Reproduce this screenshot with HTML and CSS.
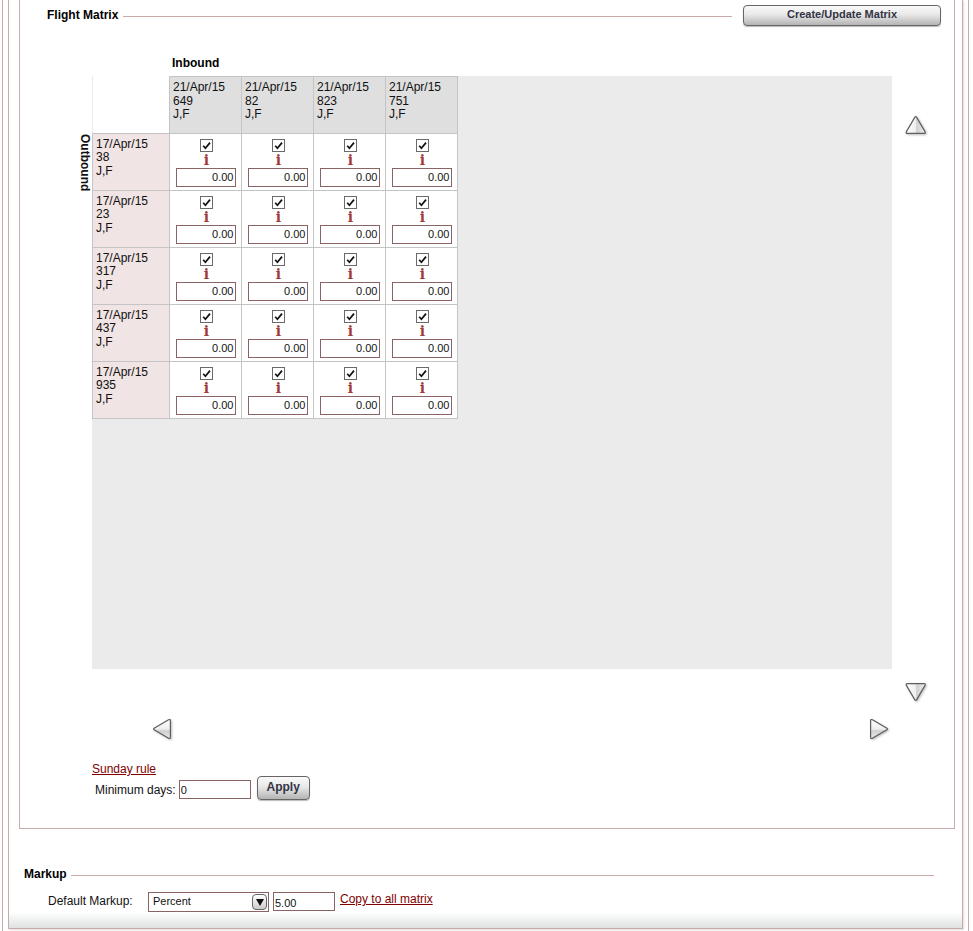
FILE: index.html
```html
<!DOCTYPE html>
<html lang="en">
<head>
<meta charset="utf-8">
<title>Flight Matrix</title>
<link rel="stylesheet" href="styles.css">
</head>
<body>
<svg class="defs" width="0" height="0" aria-hidden="true">
  <defs>
    <symbol id="tick" viewBox="0 0 13 13"><path d="M3.2 6.8 5.4 9.2 10 3.6" fill="none" stroke="#111" stroke-width="1.7"/></symbol>
    <linearGradient id="gh" x1="0" x2="1" y1="0" y2="0"><stop offset="0" stop-color="#fff"/><stop offset=".5" stop-color="#eee"/><stop offset=".55" stop-color="#d0d0d0"/><stop offset="1" stop-color="#f0f0f0"/></linearGradient>
    <linearGradient id="gv" x1="0" x2="0" y1="0" y2="1"><stop offset="0" stop-color="#fff"/><stop offset=".5" stop-color="#eee"/><stop offset=".6" stop-color="#d0d0d0"/><stop offset="1" stop-color="#e8e8e8"/></linearGradient>
  </defs>
</svg>
<div class="outer">
  <div class="panel">
    <section class="box">
      <div class="title-row">
        <h2 class="legend">Flight Matrix</h2>
        <span class="rule"></span>
        <button class="btn btn-wide" type="button">Create/Update Matrix</button>
      </div>

      <div class="matrix">
        <div class="inbound">Inbound</div>
        <div class="stage">
          <div class="scroller">
            <span class="outbound">Outbound</span>
            <table class="grid">
              <tr>
                <td class="corner"></td>
                <th>21/Apr/15<br>649<br>J,F</th>
                <th>21/Apr/15<br>82<br>J,F</th>
                <th>21/Apr/15<br>823<br>J,F</th>
                <th>21/Apr/15<br>751<br>J,F</th>
              </tr>
              <tr>
                <th class="side">17/Apr/15<br>38<br>J,F</th>
                <td><span class="chk"><svg width="13" height="13"><use href="#tick"/></svg></span><span class="info">i</span><input class="amt" value="0.00"></td>
                <td><span class="chk"><svg width="13" height="13"><use href="#tick"/></svg></span><span class="info">i</span><input class="amt" value="0.00"></td>
                <td><span class="chk"><svg width="13" height="13"><use href="#tick"/></svg></span><span class="info">i</span><input class="amt" value="0.00"></td>
                <td><span class="chk"><svg width="13" height="13"><use href="#tick"/></svg></span><span class="info">i</span><input class="amt" value="0.00"></td>
              </tr>
              <tr>
                <th class="side">17/Apr/15<br>23<br>J,F</th>
                <td><span class="chk"><svg width="13" height="13"><use href="#tick"/></svg></span><span class="info">i</span><input class="amt" value="0.00"></td>
                <td><span class="chk"><svg width="13" height="13"><use href="#tick"/></svg></span><span class="info">i</span><input class="amt" value="0.00"></td>
                <td><span class="chk"><svg width="13" height="13"><use href="#tick"/></svg></span><span class="info">i</span><input class="amt" value="0.00"></td>
                <td><span class="chk"><svg width="13" height="13"><use href="#tick"/></svg></span><span class="info">i</span><input class="amt" value="0.00"></td>
              </tr>
              <tr>
                <th class="side">17/Apr/15<br>317<br>J,F</th>
                <td><span class="chk"><svg width="13" height="13"><use href="#tick"/></svg></span><span class="info">i</span><input class="amt" value="0.00"></td>
                <td><span class="chk"><svg width="13" height="13"><use href="#tick"/></svg></span><span class="info">i</span><input class="amt" value="0.00"></td>
                <td><span class="chk"><svg width="13" height="13"><use href="#tick"/></svg></span><span class="info">i</span><input class="amt" value="0.00"></td>
                <td><span class="chk"><svg width="13" height="13"><use href="#tick"/></svg></span><span class="info">i</span><input class="amt" value="0.00"></td>
              </tr>
              <tr>
                <th class="side">17/Apr/15<br>437<br>J,F</th>
                <td><span class="chk"><svg width="13" height="13"><use href="#tick"/></svg></span><span class="info">i</span><input class="amt" value="0.00"></td>
                <td><span class="chk"><svg width="13" height="13"><use href="#tick"/></svg></span><span class="info">i</span><input class="amt" value="0.00"></td>
                <td><span class="chk"><svg width="13" height="13"><use href="#tick"/></svg></span><span class="info">i</span><input class="amt" value="0.00"></td>
                <td><span class="chk"><svg width="13" height="13"><use href="#tick"/></svg></span><span class="info">i</span><input class="amt" value="0.00"></td>
              </tr>
              <tr>
                <th class="side">17/Apr/15<br>935<br>J,F</th>
                <td><span class="chk"><svg width="13" height="13"><use href="#tick"/></svg></span><span class="info">i</span><input class="amt" value="0.00"></td>
                <td><span class="chk"><svg width="13" height="13"><use href="#tick"/></svg></span><span class="info">i</span><input class="amt" value="0.00"></td>
                <td><span class="chk"><svg width="13" height="13"><use href="#tick"/></svg></span><span class="info">i</span><input class="amt" value="0.00"></td>
                <td><span class="chk"><svg width="13" height="13"><use href="#tick"/></svg></span><span class="info">i</span><input class="amt" value="0.00"></td>
              </tr>
            </table>
          </div>
          <div class="vnav">
            <svg class="arrow" width="22" height="20" viewBox="0 0 22 20"><path d="M10.7 1.6C11 1.6 11.3 1.8 11.5 2.1L20 16.6C20.6 17.6 20.2 18.4 19.2 18.4H2.2C1.2 18.4 .8 17.6 1.4 16.6L9.9 2.1C10.1 1.8 10.4 1.6 10.7 1.6Z" fill="url(#gh)" stroke="#5f5f5f" stroke-width="1.2"/></svg>
            <svg class="arrow" width="22" height="20" viewBox="0 0 22 20"><path d="M2.2 1.6H19.2C20.2 1.6 20.6 2.4 20 3.4L11.5 17.9C11.1 18.6 10.3 18.6 9.9 17.9L1.4 3.4C.8 2.4 1.2 1.6 2.2 1.6Z" fill="url(#gh)" stroke="#5f5f5f" stroke-width="1.2"/></svg>
          </div>
        </div>
        <div class="hnav">
          <svg class="arrow" width="20" height="22" viewBox="0 0 20 22"><path d="M18.4 2.6V19.4C18.4 20.4 17.6 20.8 16.6 20.2L2.1 11.7C1.4 11.3 1.4 10.7 2.1 10.3L16.6 1.8C17.6 1.2 18.4 1.6 18.4 2.6Z" fill="url(#gv)" stroke="#5f5f5f" stroke-width="1.2"/></svg>
          <svg class="arrow" width="20" height="22" viewBox="0 0 20 22"><path d="M1.6 2.6V19.4C1.6 20.4 2.4 20.8 3.4 20.2L17.9 11.7C18.6 11.3 18.6 10.7 17.9 10.3L3.4 1.8C2.4 1.2 1.6 1.6 1.6 2.6Z" fill="url(#gv)" stroke="#5f5f5f" stroke-width="1.2"/></svg>
        </div>
        <div class="sunday">
          <a class="link" href="#">Sunday rule</a>
          <div class="min-row">
            <label class="min-label" for="mindays">Minimum days:</label>
            <input class="field min-input" id="mindays" value="0">
            <button class="btn btn-apply" type="button">Apply</button>
          </div>
        </div>
      </div>
    </section>

    <section class="markup">
      <div class="markup-title">
        <h2 class="legend">Markup</h2>
        <span class="rule"></span>
      </div>
      <div class="markup-row">
        <span class="markup-label">Default Markup:</span>
        <div class="select"><span class="select-text">Percent</span><span class="select-btn"><svg width="8" height="7" viewBox="0 0 8 7"><path d="M0 0H8L4 7Z" fill="#111"/></svg></span></div>
        <input class="field markup-input" value="5.00">
        <a class="link copy" href="#">Copy to all matrix</a>
      </div>
    </section>
  </div>
</div>
</body>
</html>
```

FILE: styles.css
```css
* { box-sizing: border-box; }
html, body { margin: 0; padding: 0; background: #fff; height: 931px; overflow: hidden; }
body { font: 12px/13px "Liberation Sans", Arial, sans-serif; color: #111; }
.defs { position: absolute; }

.outer {
  margin-left: 2px;
  width: 967px;
  height: 931px;
  border-left: 1px solid #c9aaaa;
  border-right: 1px solid #c9aaaa;
  padding: 0 5px;
}
.panel {
  height: 929px;
  border: 1px solid #c9aaaa;
  border-top: 0;
  padding: 0 7px 0 10px;
  background: linear-gradient(to bottom, #fff 0, #fff 912px, #dfe2e2 928px);
  box-shadow: 1px 1px 2px #ddd;
}
.box {
  height: 829px;
  border: 1px solid #c9aaaa;
  border-top: 0;
  background: #fff;
  padding-left: 27px;
}
.title-row { display: flex; align-items: center; height: 32px; }
.legend { margin: 0; font-size: 12px; line-height: 14px; font-weight: bold; color: #000; }
.rule { display: block; flex: 1; height: 1px; background: #c9aaaa; margin-left: 4px; }
.title-row .legend { margin-top: -3px; }
.title-row .rule { margin-left: 5px; margin-right: 11px; }
.btn {
  font-family: "Liberation Sans", Arial, sans-serif;
  font-weight: bold;
  color: #333344;
  border: 1px solid #666;
  border-radius: 4px;
  background: linear-gradient(to bottom, #fafafa 0, #e8e8e8 45%, #b4b4b4 100%);
  box-shadow: 0 1px 1px #bbb;
  padding: 0;
}
.btn-wide { width: 198px; height: 21px; margin-right: 13px; margin-top: -1px; font-size: 11px; line-height: 15px; padding-bottom: 3px; }

.matrix { margin-left: 45px; }
.inbound { font-weight: bold; color: #000; margin: 24px 0 0 80px; height: 20px; line-height: 14px; }
.stage { display: flex; height: 636px; }
.scroller { position: relative; width: 800px; height: 593px; background: #ebebeb; }
.outbound {
  position: absolute;
  left: -14px;
  top: 58px;
  writing-mode: vertical-rl;
  font-weight: bold;
  line-height: 13px;
  color: #111;
}
.grid { border-collapse: collapse; table-layout: fixed; width: 366px; }
.grid th, .grid td { padding: 0; border: 1px solid #c4c4c4; }
.grid th {
  width: 72px;
  height: 57px;
  background: #dfdfdf;
  font-weight: normal;
  text-align: left;
  vertical-align: top;
  padding: 5px 0 0 3px;
  line-height: 13.5px;
}
.grid .corner { width: 77px; background: #fff; border: 0; }
.grid th.side { width: 77px; background: #f0e4e4; padding: 4px 0 0 3px; }
.grid td { background: #fff; text-align: center; vertical-align: top; }
.grid tr:first-child th { border-top: 0; box-shadow: inset 0 1px #c4c4c4; }
.chk {
  display: block;
  width: 13px;
  height: 13px;
  margin: 5px auto 0;
  border: 1px solid #6a6a6a;
  background: #fff;
  position: relative;
  left: 1px;
}
.chk svg { display: block; margin: -1px; }
.info {
  display: block;
  height: 16px;
  font: bold 14px/16px "DejaVu Serif", serif;
  color: #a33a3a;
  position: relative;
  left: 1px;
}
.amt, .field {
  display: block;
  font: 11px "Liberation Sans", Arial, sans-serif;
  color: #111;
  border: 1px solid #8a6464;
  background: #fff;
  border-radius: 0;
  outline: 0;
  padding: 0 1px;
}
.amt { width: 60px; height: 19px; margin: 0 auto; text-align: right; }

.vnav { display: flex; flex-direction: column; justify-content: space-between; width: 46px; padding: 39px 0 10px 13px; }
.arrow { display: block; filter: drop-shadow(1px 1px 1px #bbb); }
.hnav { display: flex; justify-content: space-between; width: 737px; margin: 6px 0 0 60px; height: 22px; }

.sunday { margin-top: 23px; }
.link { color: #800000; text-decoration: underline; }
.min-row { display: flex; align-items: center; height: 24px; padding-left: 3px; }
.min-label { margin-right: 3px; margin-top: 5px; }
.min-input { width: 72px; height: 19px; margin-top: 3px; }
.btn-apply { width: 53px; height: 24px; margin-left: 6px; font-size: 12px; padding-bottom: 3px; }

.markup { padding-left: 5px; }
.markup-title { display: flex; align-items: center; margin-top: 39px; height: 14px; margin-right: 21px; }
.markup-title .legend { margin-top: -2px; }
.markup-row { display: flex; align-items: flex-start; margin: 10px 0 0 24px; }
.markup-label { width: 100px; line-height: 14px; margin-top: 2px; }
.select {
  display: flex;
  align-items: center;
  justify-content: space-between;
  width: 121px;
  height: 20px;
  border: 1px solid #8a6464;
  padding: 0 1px 0 4px;
  font-size: 11px;
}
.select-text { margin-top: -2px; }
.select-btn {
  display: flex;
  align-items: center;
  justify-content: center;
  width: 15px;
  height: 16px;
  border: 1px solid #666;
  border-radius: 4px;
  background: linear-gradient(to bottom, #fff, #ccc);
}
.markup-input { width: 62px; height: 19px; margin-left: 4px; padding-top: 2px; }
.copy { margin: 1px 0 0 5px; line-height: 13px; }
```
